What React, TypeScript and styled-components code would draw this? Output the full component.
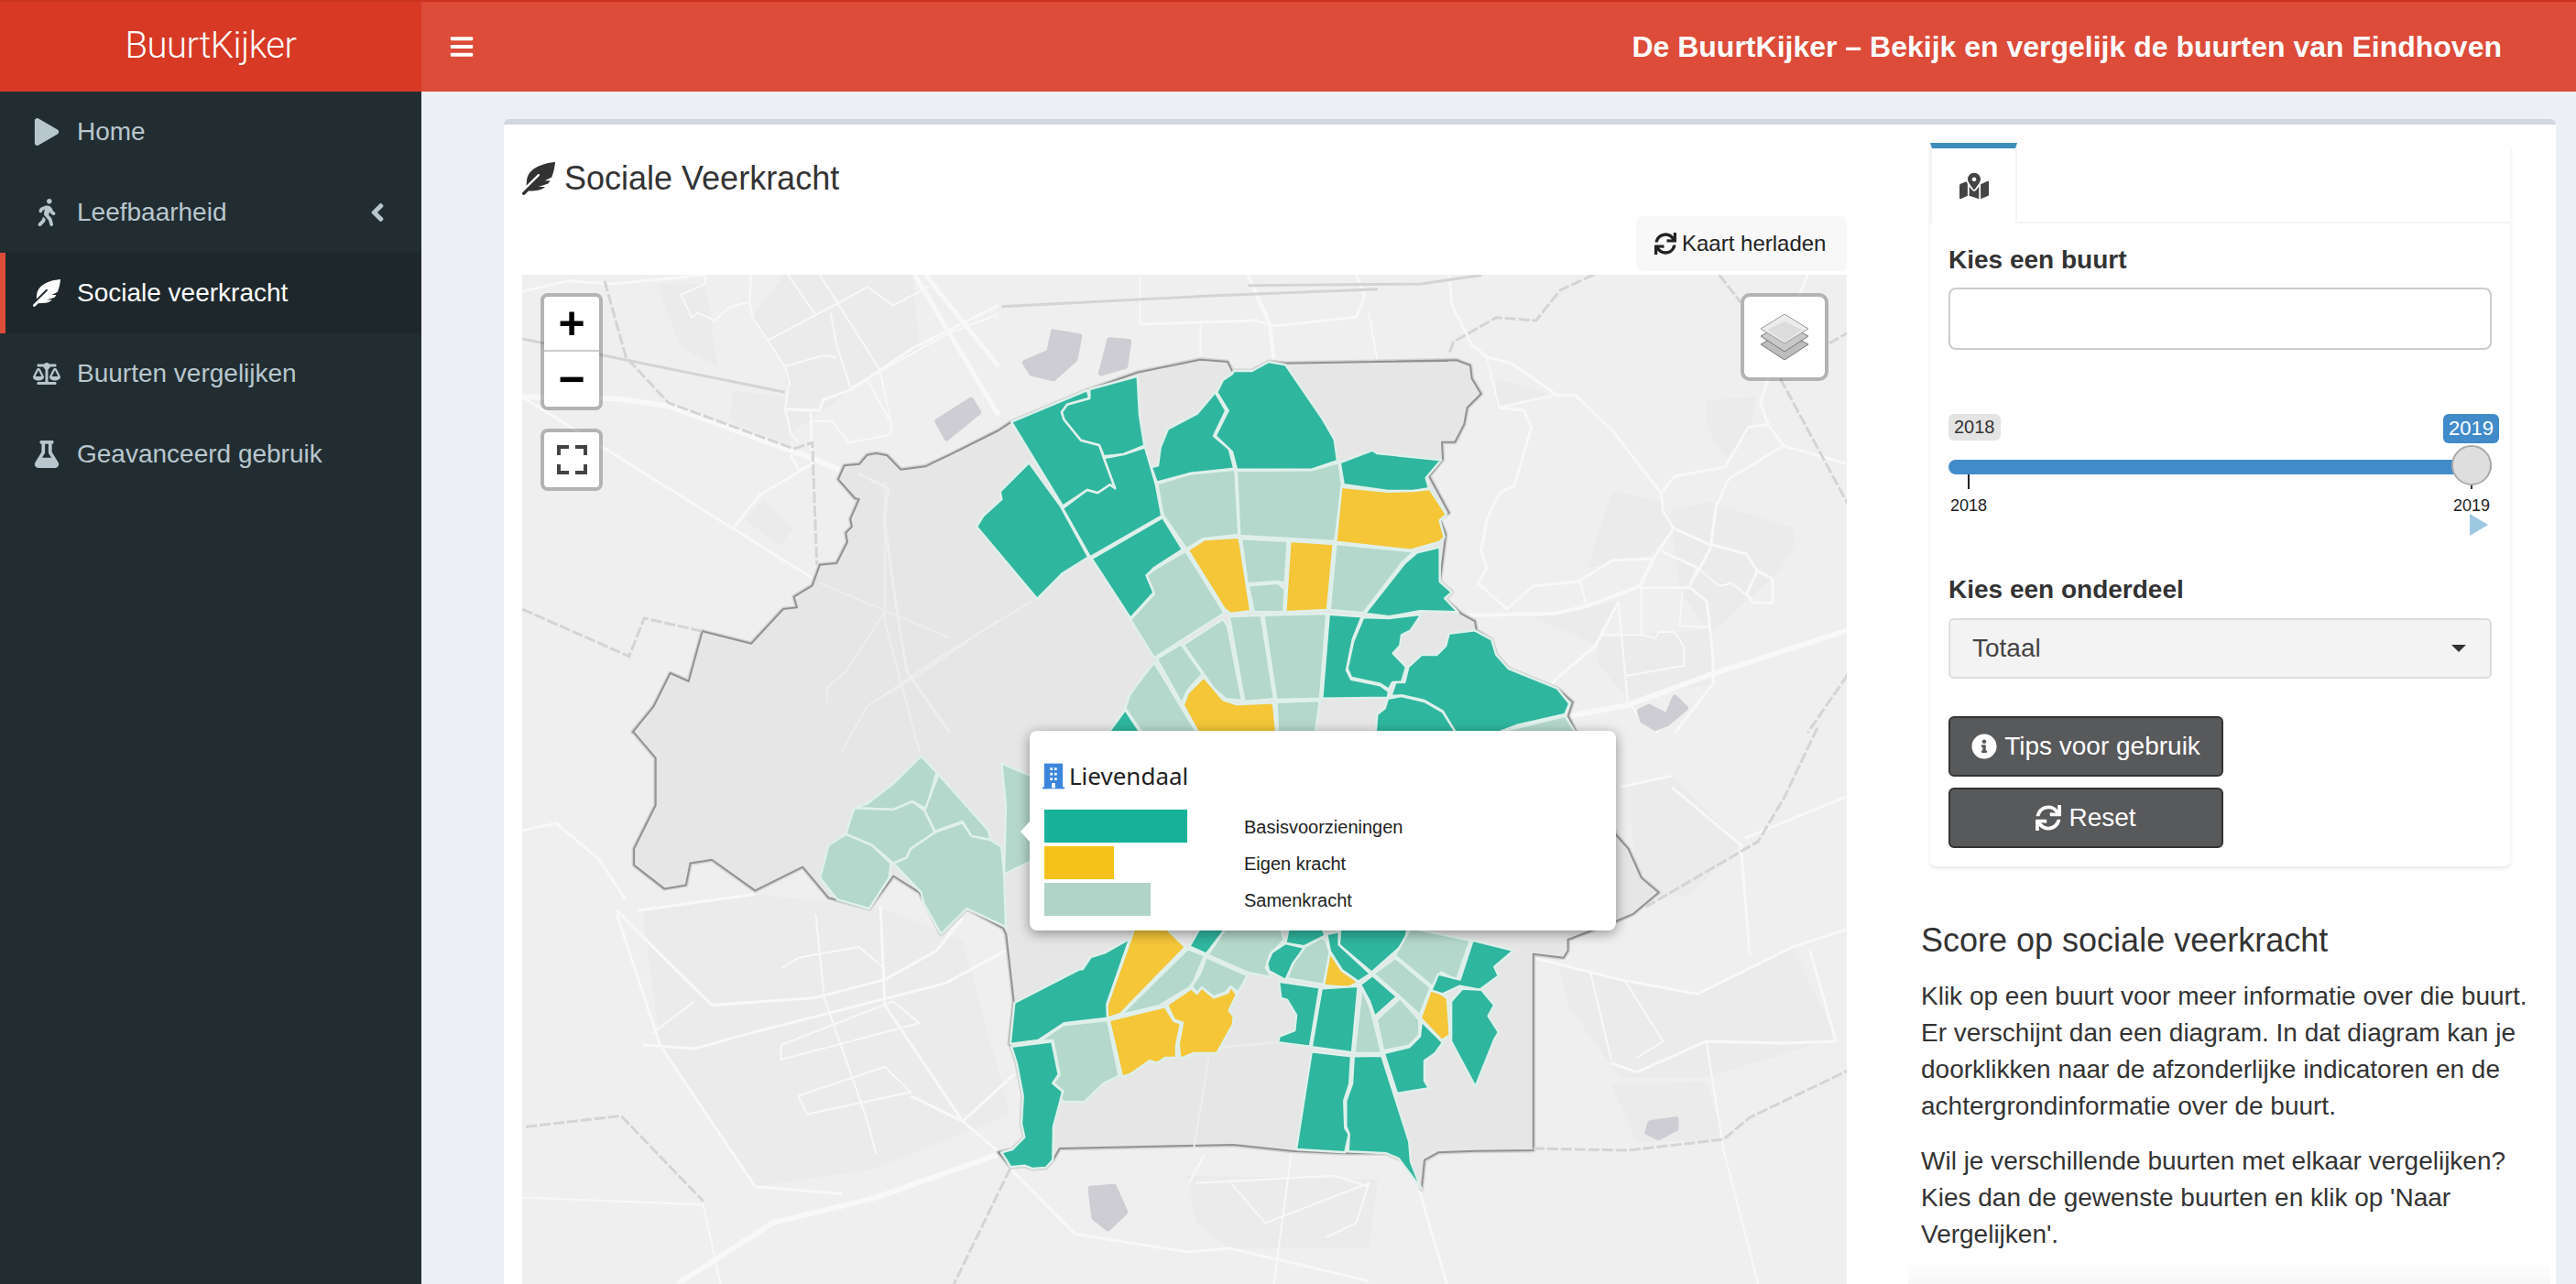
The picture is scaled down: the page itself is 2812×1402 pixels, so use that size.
import styled, { createGlobalStyle } from "styled-components";
import {
  FaAngleLeft,
  FaBalanceScale,
  FaBars,
  FaFeatherAlt,
  FaFlask,
  FaInfoCircle,
  FaMapMarkedAlt,
  FaPlay,
  FaSync,
  FaWalking,
} from "react-icons/fa";

const GlobalStyle = createGlobalStyle`
  html, body {
    margin: 0;
    padding: 0;
    height: 1402px;
    overflow: hidden;
    background: #ecf0f5;
    font-family: "Liberation Sans", Arial, sans-serif;
    color: #333;
  }
  * { box-sizing: border-box; }
`;

const Page = styled.div`
  display: flex;
  flex-direction: column;
  height: 1402px;
`;

const Header = styled.header`
  display: flex;
  flex: none;
  height: 100px;
  border-top: 2px solid #c8321f;
  color: #fff;
`;

const Logo = styled.div`
  width: 460px;
  padding-top: 2px;
  background: #d73925;
  font-family: Roboto, "Liberation Sans", sans-serif;
  font-size: 40px;
  font-weight: 300;
  letter-spacing: -0.5px;
  line-height: 92px;
  text-align: center;
`;

const Navbar = styled.div`
  flex: 1;
  display: flex;
  align-items: center;
  justify-content: space-between;
  padding: 0 81px 0 30px;
  background: #dd4b39;
  svg {
    font-size: 28px;
  }
`;

const NavTitle = styled.div`
  font-size: 32px;
  font-weight: bold;
`;

const Body = styled.div`
  flex: 1;
  display: flex;
  min-height: 0;
`;

const Sidebar = styled.nav`
  width: 460px;
  background: #222d32;
`;

const MenuItem = styled.div<{ $active?: boolean }>`
  display: flex;
  align-items: center;
  height: 88px;
  padding-left: ${(p) => (p.$active ? 30 : 36)}px;
  border-left: ${(p) => (p.$active ? "6px solid #dd4b39" : "none")};
  background: ${(p) => (p.$active ? "#1e282c" : "transparent")};
  color: ${(p) => (p.$active ? "#fff" : "#b8c7ce")};
  font-size: 28px;
`;

const MenuIcon = styled.span`
  display: flex;
  align-items: center;
  width: 48px;
  font-size: 30px;
`;

const MenuAngle = styled.span`
  display: flex;
  margin-left: auto;
  margin-right: 32px;
  font-size: 32px;
`;

const Content = styled.main`
  flex: 1;
  min-width: 0;
  padding: 30px 22px 0 90px;
`;

const Box = styled.section`
  display: flex;
  height: 100%;
  padding: 0 20px;
  border-top: 6px solid #d2d6de;
  border-radius: 6px 6px 0 0;
  background: #fff;
`;

const LeftColumn = styled.div`
  display: flex;
  flex-direction: column;
  width: 1446px;
`;

const BoxTitle = styled.h3`
  display: flex;
  align-items: center;
  gap: 10px;
  height: 40px;
  margin: 39px 0 0;
  font-size: 36px;
  font-weight: normal;
  line-height: 40px;
  svg {
    font-size: 36px;
  }
`;

const ReloadButton = styled.button`
  display: flex;
  align-items: center;
  align-self: flex-end;
  gap: 6px;
  width: 230px;
  height: 60px;
  margin: 21px 0 4px;
  padding: 0 0 0 20px;
  border: none;
  border-radius: 6px;
  background: #f8f8f8;
  color: #222;
  font-family: inherit;
  font-size: 24px;
`;

const MapFrame = styled.div`
  position: relative;
  flex: 1;
  overflow: hidden;
  background: #efefef;
  svg.base {
    display: block;
  }
`;

const ControlGroup = styled.div<{ $top: number }>`
  position: absolute;
  top: ${(p) => p.$top}px;
  left: 20px;
  width: 68px;
  border: 4px solid rgba(0, 0, 0, 0.25);
  border-radius: 8px;
  background: #fff;
  background-clip: padding-box;
`;

const ZoomButton = styled.div<{ $divider?: boolean }>`
  display: flex;
  align-items: center;
  justify-content: center;
  height: 60px;
  border-bottom: ${(p) => (p.$divider ? "2px solid #ccc" : "none")};
  color: #000;
  font-family: "Liberation Sans", sans-serif;
  font-size: 50px;
  font-weight: bold;
  line-height: 1;
`;

const LayersControl = styled.div`
  position: absolute;
  top: 20px;
  right: 20px;
  display: flex;
  align-items: center;
  justify-content: center;
  width: 96px;
  height: 96px;
  border: 4px solid rgba(0, 0, 0, 0.25);
  border-radius: 10px;
  background: #fff;
  background-clip: padding-box;
`;

const Popup = styled.div`
  position: absolute;
  top: 498px;
  left: 554px;
  width: 640px;
  height: 218px;
  padding: 33px 16px 0;
  border-radius: 8px;
  background: #fff;
  box-shadow: 0 3px 14px rgba(0, 0, 0, 0.4);
  &::before {
    content: "";
    position: absolute;
    top: 99px;
    left: -10px;
    border-style: solid;
    border-width: 11px 10px 11px 0;
    border-color: transparent #fff transparent transparent;
  }
`;

const PopupTitle = styled.div`
  display: flex;
  align-items: center;
  gap: 5px;
  height: 32px;
  margin-bottom: 21px;
  margin-left: -2px;
  color: #222;
  font-family: "Noto Sans", sans-serif;
  font-size: 26px;
`;

const ScoreRow = styled.div`
  display: grid;
  grid-template-columns: 218px 1fr;
  align-items: center;
  height: 36px;
  margin-bottom: 4px;
  color: #222;
  font-size: 20px;
`;

const ScoreLabel = styled.span`
  padding-top: 2px;
`;

const ScoreBar = styled.div<{ $width: number; $color: string }>`
  width: ${(p) => p.$width}px;
  height: 36px;
  background: ${(p) => p.$color};
`;

const RightColumn = styled.aside`
  position: relative;
  width: 680px;
  margin-left: 81px;
  &::after {
    content: "";
    position: absolute;
    right: -14px;
    bottom: 0;
    left: -14px;
    height: 28px;
    background: linear-gradient(rgba(0, 0, 0, 0), rgba(0, 0, 0, 0.03));
  }
`;

const TabBox = styled.div`
  width: 633px;
  margin: 20px 0 61px 10px;
  border-radius: 6px;
  background: #fff;
  box-shadow: 0 2px 4px rgba(0, 0, 0, 0.1);
`;

const TabBar = styled.div`
  height: 88px;
  border-bottom: 2px solid #f4f4f4;
`;

const ActiveTab = styled.div`
  display: flex;
  align-items: center;
  justify-content: center;
  width: 95px;
  height: 88px;
  border-top: 6px solid #3c8dbc;
  border-right: 2px solid #f4f4f4;
  border-left: 2px solid #f4f4f4;
  background: #fff;
  color: #444;
  font-size: 32px;
`;

const TabPane = styled.div`
  padding: 24px 20px 20px;
`;

const FieldLabel = styled.label`
  display: block;
  font-size: 28px;
  font-weight: bold;
  line-height: 32px;
`;

const TextInput = styled.div`
  height: 68px;
  margin: 14px 0 70px;
  border: 2px solid #ccc;
  border-radius: 8px;
  background: #fff;
`;

const SliderLabels = styled.div`
  display: flex;
  align-items: flex-start;
  justify-content: space-between;
  height: 32px;
  margin-right: -8px;
`;

const MinChip = styled.span`
  padding: 0 6px;
  border-radius: 6px;
  background: #e4e4e4;
  font-size: 20px;
  line-height: 29px;
`;

const MaxChip = styled.span`
  padding: 0 6px;
  border-radius: 6px;
  background: #428bca;
  color: #fff;
  font-size: 22px;
  line-height: 32px;
`;

const Track = styled.div`
  position: relative;
  height: 16px;
  margin-top: 18px;
  border-radius: 8px;
  background: #428bca;
`;

const Handle = styled.div`
  position: absolute;
  top: -16px;
  right: 0;
  width: 44px;
  height: 44px;
  border: 2px solid #aaa;
  border-radius: 50%;
  background: #dedede;
`;

const TickRow = styled.div`
  display: flex;
  justify-content: space-between;
`;

const TickCell = styled.div`
  display: flex;
  flex-direction: column;
  align-items: center;
  width: 44px;
  color: #222;
  font-size: 18px;
  line-height: 24px;
`;

const Tick = styled.div<{ $short?: boolean }>`
  width: 2px;
  height: 16px;
  margin-bottom: 6px;
  background: ${(p) => (p.$short ? "linear-gradient(transparent 70%, #333 70%)" : "#222")};
`;

const PlayRow = styled.div`
  display: flex;
  justify-content: flex-end;
  height: 24px;
  margin: -3px 0 43px;
  padding-right: 4px;
`;

const SelectBox = styled.div`
  display: flex;
  align-items: center;
  justify-content: space-between;
  height: 66px;
  margin: 15px 0 41px;
  padding: 0 26px 0 24px;
  border: 2px solid #ddd;
  border-radius: 6px;
  background: #f3f3f3;
  color: #444;
  font-size: 28px;
`;

const Caret = styled.span`
  border-style: solid;
  border-width: 8px 8px 0;
  border-color: #333 transparent transparent;
`;

const DarkButton = styled.button`
  display: flex;
  align-items: center;
  justify-content: center;
  gap: 8px;
  width: 300px;
  height: 66px;
  margin-bottom: 12px;
  border: 2px solid #333;
  border-radius: 6px;
  background: #58595b;
  color: #fff;
  font-family: inherit;
  font-size: 28px;
  &:last-child {
    margin-bottom: 0;
  }
`;

const ScoreHeading = styled.h3`
  margin: 0 0 21px;
  font-size: 36px;
  font-weight: normal;
  line-height: 40px;
`;

const Paragraph = styled.p`
  margin: 0 0 20px;
  font-size: 28px;
  line-height: 40px;
`;

// map coordinates were read from crops of different scale, each crop is a frame
type Frame = "t" | "b" | "n" | "s" | "w" | "e";
type Pts = number[];

const frames: Record<Frame, [number, number, number, number]> = {
  t: [560, 220, 0.9439, 0.3827],
  b: [560, 780, 0.9439, 0.3967],
  n: [1060, 390, 1 / 3, 1 / 3],
  s: [1090, 1010, 1 / 3, 1 / 3],
  w: [570, 300, 1 / 3, 1 / 3],
  e: [1500, 300, 1 / 3, 1 / 3],
};

const toPage = (frame: Frame, pts: Pts) => {
  const [ox, oy, sx, sy] = frames[frame];
  const out: string[] = [];
  for (let i = 0; i < pts.length; i += 2) {
    out.push(`${(ox + pts[i] * sx).toFixed(1)},${(oy + pts[i + 1] * sy).toFixed(1)}`);
  }
  return out.join(" ");
};

const TEAL = "#2fb69f";
const LIGHT = "#b4d8cb";
const YELLOW = "#f4c638";

const cityOutline = [
  toPage("w", [362,1498,430,1415,485,1305,545,1332,590,1168,750,1208,855,1095,900,1090,890,1055,950,1018,975,950,1030,945,1065,875,1060,845,1080,825,1075,800,1103,735,1090,732,1035,670,1055,625,1105,620,1130,590,1160,585,1195,592,1240,638,1320,628,1400,590,1560,510]),
  toPage("n", [132,212,380,108,545,50,750,8,840,15,855,45,920,45,975,15,1030,20,1330,15,1560,12]),
  toPage("e", [0,285,270,280,315,297,320,340,350,390,305,435,295,490,265,548,222,548,225,605,180,660,245,780,215,800,235,850,215,1005,255,1040,232,1060,285,1110,330,1135,335,1165,385,1195,400,1245,440,1290,600,1355,650,1400,635,1445,660,1495]),
  toPage("b", [1275,330,1290,370,1305,450,1325,490,1295,550,1275,570,1220,620,1220,650,1215,670,1180,660,1180,1200]),
  toPage("s", [1560,740,1440,745,1395,770,1385,865,1350,775,1310,765,1270,748,1135,748,960,740,770,720,200,732,178,770,155,795,110,798,85,788,40,793,0,745,45,735,85,695,75,650,80,560,60,455,42,398,35,390,50,250,25,30,15,10]),
  toPage("b", [525,535,495,605,470,490,440,445,412,535,365,505,335,420,280,485,230,400,205,410,200,470,175,480,140,415,140,370,165,250,165,120,140,50]),
].join(" ");

const hoods: [string, Frame, Pts][] = [
  [TEAL,"n",[132,212,380,108,388,135,315,155,297,180,305,205,360,272,420,288,435,330,472,430,455,418,415,445,380,435,300,488]],
  [TEAL,"n",[388,105,545,62,552,190,568,290,500,318,435,325,420,288,360,272,305,205,297,180,315,155,388,135]],
  [TEAL,"n",[570,295,605,415,625,520,390,655,300,495,380,435,415,445,455,418,472,430,435,330,500,318]],
  [TEAL,"n",[190,345,295,490,385,655,300,708,217,792,18,555,40,520,100,465,95,440]],
  [TEAL,"n",[628,525,693,630,600,690,575,715,600,770,522,855,395,660]],
  [TEAL,"n",[800,115,835,175,795,258,845,300,862,365,720,380,608,410,590,360,612,355,620,295,645,235,740,185]],
  [TEAL,"n",[975,15,1030,25,1150,200,1190,270,1200,340,1115,368,870,368,855,310,800,258,842,175,805,115,825,75,855,55,860,45,920,45]],
  [TEAL,"n",[1208,345,1315,305,1330,315,1540,337,1490,395,1500,430,1450,438,1365,438,1220,418]],
  [LIGHT,"n",[610,415,720,382,865,368,877,582,760,595,705,628,628,515]],
  [LIGHT,"n",[870,372,1115,370,1205,345,1215,420,1192,603,880,585]],
  [YELLOW,"n",[1213,425,1365,440,1450,438,1502,432,1557,515,1535,535,1550,590,1535,605,1440,632,1195,605]],
  [YELLOW,"n",[765,597,878,590,916,832,850,840,830,825,710,632]],
  [LIGHT,"n",[885,595,1037,602,1028,740,1005,735,905,742]],
  [LIGHT,"n",[908,748,1005,740,1028,760,1024,835,926,835]],
  [YELLOW,"n",[1045,602,1187,612,1167,828,1030,835]],
  [LIGHT,"n",[1195,612,1450,637,1410,675,1285,838,1175,828]],
  [TEAL,"n",[1420,675,1460,640,1535,622,1535,735,1575,770,1552,790,1595,835,1470,832,1370,850,1290,840]],
  [LIGHT,"n",[703,635,830,838,600,985,522,860,600,775,575,715,600,695]],
  [LIGHT,"n",[825,858,840,880,888,1125,835,1120,795,1085,695,942]],
  [LIGHT,"n",[845,850,950,845,993,1120,895,1128]],
  [LIGHT,"n",[958,845,1165,840,1143,1118,1000,1122]],
  [LIGHT,"n",[608,988,688,940,758,1038,710,1090,690,1135]],
  [YELLOW,"n",[762,1048,825,1122,870,1137,990,1132,1000,1230,745,1230,695,1140,710,1100]],
  [LIGHT,"n",[600,1000,685,1140,740,1230,560,1230,505,1150,520,1105,560,1050]],
  [TEAL,"n",[505,1155,555,1230,450,1230]],
  [LIGHT,"n",[1000,1130,1142,1125,1128,1230,1005,1230]],
  [TEAL,"n",[1172,842,1280,850,1250,925,1230,1025,1245,1055,1340,1075,1368,1095,1365,1115,1150,1118]],
  [TEAL,"n",[1285,852,1370,855,1475,842,1440,895,1410,910,1405,945,1382,970,1425,1015,1410,1065,1380,1065,1368,1088,1340,1070,1245,1050,1232,1020,1252,930]],
  [TEAL,"e",[245,1175,330,1165,385,1195,400,1245,440,1290,600,1355,640,1405,625,1440,470,1475,405,1500,265,1500,225,1430,165,1395,90,1378,55,1380,70,1335,100,1335,112,1285,155,1245,205,1245,235,1215]],
  [TEAL,"e",[45,1388,90,1380,165,1398,225,1432,268,1500,5,1500,10,1440,35,1420]],
  [LIGHT,"e",[405,1500,625,1445,660,1500]],

  [LIGHT,"b",[472,115,490,160,478,260,462,240,440,262,395,258,410,245,440,190]],
  [LIGHT,"b",[492,165,550,320,552,345,530,335,520,295,488,322,476,265]],
  [LIGHT,"b",[395,258,440,262,462,240,476,265,488,325,460,370,455,395,440,410,415,360,385,330,390,290]],
  [LIGHT,"b",[385,330,415,360,437,410,435,450,412,535,375,510,355,450,365,360]],
  [LIGHT,"b",[488,325,520,298,530,335,552,345,565,365,568,440,570,585,525,535,495,605,475,520,472,490,440,410,455,395,460,370]],
  [LIGHT,"b",[565,135,620,190,620,380,568,440,570,250]],

  [YELLOW,"s",[435,40,355,265,357,305,398,292,612,72,548,10,445,10]],
  [TEAL,"s",[625,70,660,10,745,10,680,95]],
  [TEAL,"s",[430,45,355,260,357,305,215,322,130,378,38,390,52,255,265,145,275,145,302,105,350,90]],
  [LIGHT,"s",[620,78,675,100,640,185,625,205,525,265,400,295]],
  [LIGHT,"s",[680,105,815,165,785,220,760,202,745,220,705,235,665,205,650,222,632,200,660,160]],
  [LIGHT,"s",[745,10,925,10,935,50,890,95,875,140,895,172,815,155,685,98]],
  [YELLOW,"s",[552,262,632,208,650,225,665,205,705,238,750,222,762,202,780,228,755,280,770,300,768,325,715,420,640,420,595,438,590,390,603,320,575,310]],
  [YELLOW,"s",[362,312,545,268,575,315,597,322,582,395,582,435,545,435,520,452,495,445,430,490,405,497]],
  [LIGHT,"s",[357,312,395,495,345,518,280,580,215,578,200,570,212,545,180,518,200,490,178,378,135,380,212,328]],
  [TEAL,"s",[42,398,175,382,197,490,178,518,210,545,200,585,180,660,178,770,155,795,110,798,85,788,40,793,10,745,45,735,85,695,75,650,80,560,60,455]],
  [TEAL,"s",[950,10,1060,10,1070,35,1010,65,1000,70,940,60]],
  [TEAL,"s",[1005,75,965,125,940,180,885,150,880,125,895,90,940,60]],
  [LIGHT,"s",[1060,42,1072,50,1085,90,1065,195,945,175,965,125,1005,70]],
  [YELLOW,"s",[1085,90,1125,150,1178,187,1145,205,1065,198]],
  [TEAL,"s",[1120,10,1340,10,1330,60,1222,155,1115,65]],
  [TEAL,"s",[1075,30,1115,22,1115,65,1218,160,1178,185,1125,148,1085,85]],
  [LIGHT,"s",[1350,10,1545,50,1500,180,1450,155,1420,200,1298,100]],
  [LIGHT,"s",[1300,108,1415,205,1380,295,1315,235,1228,160]],
  [TEAL,"s",[1225,165,1305,235,1232,300,1215,250,1185,195]],
  [YELLOW,"s",[1418,205,1470,240,1478,360,1452,378,1382,305]],
  [LIGHT,"s",[1315,240,1378,310,1378,360,1345,395,1260,412,1238,310]],
  [LIGHT,"s",[1190,205,1220,280,1255,420,1165,420]],
  [TEAL,"s",[918,185,1052,205,1020,398,915,385,920,365,970,345,975,295,945,245,925,240]],
  [TEAL,"s",[1058,208,1178,200,1158,418,1025,400]],
  [TEAL,"s",[1385,315,1455,385,1430,420,1395,445,1395,510,1410,535,1305,552,1262,420,1345,400,1380,365]],
  [TEAL,"s",[1025,415,1155,430,1150,520,1132,575,1135,665,1148,685,1135,745,975,735]],
  [TEAL,"s",[1163,430,1255,428,1345,710,1350,775,1385,865,1310,765,1270,748,1145,742,1148,685,1138,660,1138,575,1158,520]],
  [TEAL,"b",[1110,622,1157,650,1135,695,1140,720,1118,758,1095,748,1075,770,1062,760,1070,715,1095,730]],
  [TEAL,"b",[1098,755,1120,758,1135,800,1128,830,1140,875,1135,895,1113,1025,1085,900,1085,790]],
];

// built-up areas around the city, a bit darker than the base map
const patches: [Frame, Pts][] = [
  ["w",[440,30,600,30,640,300,520,240]],
  ["w",[690,380,860,400,880,560,680,480]],
  ["w",[730,800,790,740,890,830,840,890]],
  ["w",[860,0,1280,0,1300,240,1080,375,880,520,860,300,750,140]],
  ["e",[400,340,570,390,400,430]],
  ["e",[1090,410,1250,400,1230,520,1150,600,1090,500]],
  ["e",[780,710,940,740,985,830,900,920,700,960,740,830]],
  ["e",[970,770,1100,745,1375,830,1380,880,1320,980,1230,1060,1100,1180,1000,1030]],
  ["e",[520,1120,800,1070,720,1210]],
  ["e",[730,1190,1100,1160,1110,1340,830,1390,730,1270]],
  ["b",[150,540,280,495,420,530,520,620,575,1100,420,1250,280,1300,170,910]],
  ["b",[1210,690,1285,730,1370,770,1480,640,1530,890,1380,1000,1280,1000,1220,800]],
  ["b",[1290,200,1340,170,1420,360,1360,500,1300,500]],
  ["b",[780,1270,1000,1280,990,1470,830,1470,790,1400]],
  ["b",[1270,1020,1380,1010,1400,1170,1300,1180]],
];

const roads: [Frame, number, Pts][] = [
  ["w",3,[0,55,150,20,300,30,600,0]],
  ["w",2,[600,0,600,30,520,65,555,140,575,125,630,150,680,105,745,90,750,0]],
  ["w",2,[745,90,755,140,860,300,875,350,860,440,880,520,905,550]],
  ["w",3,[865,440,975,445,985,410,1080,375,1280,240,1560,100]],
  ["w",2,[1075,370,1400,190,1560,130]],
  ["w",2,[805,215,1040,90,1130,40,1215,100,1330,40]],
  ["w",2,[870,0,960,130]],
  ["w",2,[975,0,1170,310,1210,490,1205,525,1070,550,1015,480,950,480]],
  ["w",2,[1010,125,1030,230,1075,370]],
  ["w",2,[860,300,985,265,1030,270]],
  ["w",5,[1285,0,1560,460]],
  ["w",5,[1320,0,1560,300]],
  ["w",2,[1135,350,1210,490]],
  ["w",6,[0,400,300,405,480,430,960,605,1040,640]],
  ["w",3,[945,450,950,630]],
  ["w",3,[880,590,905,640,950,620,780,720,690,830]],
  ["w",3,[0,400,960,1000]],
  ["e",3,[245,0,255,100,320,230,370,270,450,290,600,395,660,395,780,510,940,715,945,770,980,830,1090,880,1220,915,1255,970,1220,1045,1240,1075,1305,1075,1305,995,1255,970]],
  ["e",2,[370,275,410,435,590,395]],
  ["e",3,[410,435,490,445,515,500,460,690,410,715,370,800,350,905,370,960,340,1010,435,1095,520,1020,670,1005]],
  ["e",3,[670,1005,780,935,915,930,980,830]],
  ["e",4,[915,930,870,1020,700,1085,590,1110,300,1115]],
  ["e",3,[940,715,985,660,1150,630,1225,500,1290,490,1340,560,1160,670,1120,760,1100,900,1035,1015,1060,960,940,905]],
  ["e",3,[1340,560,1551,620]],
  ["e",3,[1290,490,1265,420,1330,220,1420,0]],
  ["e",2,[675,1005,695,1085]],
  ["e",3,[870,1025,1035,1025,1090,1070,1110,1250,1110,1340,985,1500]],
  ["e",2,[875,1030,875,1180,750,1180]],
  ["e",2,[1000,1150,1100,1155]],
  ["e",3,[800,1070,725,1215,600,1320,575,1350]],
  ["e",2,[800,1070,830,1395,870,1450,930,1500]],
  ["e",2,[875,1180,920,1190,935,1170,985,1170,1015,1220,1015,1280,820,1315]],
  ["e",2,[1010,1035,1000,1150]],
  ["e",2,[1060,960,1130,1020,1170,1010,1220,1050]],
  ["e",6,[640,1445,830,1410,1100,1310,1551,1165]],
  ["t",4,[850,210,875,350,880,450]],
  ["t",3,[725,350,860,340,880,355,975,330,985,270,975,210]],
  ["t",2,[725,350,725,210]],
  ["t",2,[795,340,795,450]],
  ["t",2,[990,320,1000,460]],
  ["b",6,[562,1210,420,1330,300,1400,190,1568]],
  ["b",3,[120,550,170,910,280,1300,380,1320]],
  ["b",3,[145,540,280,495]],
  ["b",3,[150,910,210,920,270,880,500,740,570,650,670,660]],
  ["b",3,[120,540,200,730,230,800,350,780,430,730,490,650,520,560]],
  ["b",2,[350,550,360,780,410,1120,420,1210]],
  ["b",3,[425,530,430,800,520,1120,575,1230]],
  ["b",3,[460,1050,520,1120,580,990]],
  ["b",2,[310,910,440,790,470,850,310,950,310,910]],
  ["b",2,[330,1050,430,970,460,1040,340,1100,330,1050]],
  ["b",2,[310,700,330,670,400,640,430,700]],
  ["b",2,[210,790,160,880]],
  ["b",3,[1180,670,1280,730,1370,770,1480,640,1544,590]],
  ["b",3,[1270,960,1300,985,1380,900,1470,905,1530,900,1500,650]],
  ["b",2,[1245,700,1270,950]],
  ["b",2,[1285,730,1330,900,1300,945]],
  ["b",3,[1340,200,1420,360,1430,660]],
  ["b",3,[1280,200,1340,170]],
  ["b",3,[1425,340,1544,225]],
  ["b",3,[10,320,50,300,100,400,130,510]],
  ["b",2,[10,1330,220,1350,240,1568]],
  ["b",2,[800,1210,782,1290]],
  ["b",2,[900,1210,880,1568]],
  ["b",3,[1048,1310,1080,1568]],
  ["b",3,[575,1250,650,1430,780,1480,830,1470,990,1560]],
  ["b",2,[830,1290,870,1400,990,1290,975,1400,940,1440]],
  ["b",2,[1380,900,1400,1200,1440,1568]],
  ["b",2,[790,1290,950,1270,990,1300]],
];

// fainter streets inside the city outline
const faintRoads: [Frame, number, Pts][] = [
  ["w",3,[1100,650,1200,700,1185,800,1230,1120,1260,1300,1400,1500]],
  ["w",2,[1190,1100,1060,1300,1000,1350,1000,1400]],
  ["w",2,[1150,1400,1300,1310,1560,1130]],
  ["w",2,[975,1010,1400,1190]],
  ["t",2,[600,1140,500,1290,410,1440,380,1568]],
  ["t",2,[430,800,430,1200,470,1568]],
  ["s",2,[690,425,640,730]],
  ["s",2,[735,400,915,385]],
  ["b",2,[1000,320,1000,600]],
];

const rails: [Frame, Pts, boolean][] = [
  ["w",[0,210,860,385],false],
  ["w",[270,20,340,270,480,420,890,570],true],
  ["w",[890,570,950,550,965,950],true],
  ["w",[0,1095,350,1250,400,1125,590,1168],true],
  ["t",[565,300,800,270,1000,250],false],
  ["t",[850,240,1050,235,1120,210],false],
  ["e",[720,0,610,50,530,150,400,140,260,220,245,260],true],
  ["e",[1130,0,1200,90],true],
  ["e",[1330,340,1551,750],true],
  ["e",[1551,1310,1420,1500],true],
  ["e",[1490,225,1551,190],true],
  ["b",[15,1135,125,1105,220,1340],true],
  ["b",[1310,530,1440,350,1470,230,1510,30],true],
  ["b",[1180,1195,1290,1200,1400,1170,1430,1110,1544,980],true],
  ["b",[575,1250,510,1568],true],
];

const ponds: [Frame, Pts][] = [
  ["t",[625,372,655,385,650,450,625,505,600,490,592,460,620,430]],
  ["t",[690,395,712,400,708,470,680,490]],
  ["w",[1360,480,1470,410,1495,450,1390,535]],
  ["e",[870,1430,900,1415,960,1445,985,1385,1020,1420,960,1470,920,1485,880,1460]],
  ["b",[668,1305,695,1300,708,1370,688,1415,672,1385]],
  ["b",[1315,1125,1345,1115,1345,1140,1325,1165,1312,1150]],
];

const CityMap = () => (
  <svg className="base" width="1446" height="1102" viewBox="570 300 1446 1102">
    {patches.map(([f, p], i) => (
      <polygon key={i} points={toPage(f, p)} fill="#ebebeb" />
    ))}
    {roads.map(([f, w, p], i) => (
      <polyline key={i} points={toPage(f, p)} fill="none" stroke="#f8f8f8" strokeWidth={w} strokeLinejoin="round" />
    ))}
    <polygon points={cityOutline} fill="none" stroke="#d4d4d4" strokeWidth="5" strokeLinejoin="round" />
    <polygon points={cityOutline} fill="#e6e6e6" stroke="#929292" strokeWidth="2" strokeLinejoin="round" />
    {faintRoads.map(([f, w, p], i) => (
      <polyline key={i} points={toPage(f, p)} fill="none" stroke="#eeeeee" strokeWidth={w} strokeLinejoin="round" />
    ))}
    {ponds.map(([f, p], i) => (
      <polygon key={i} points={toPage(f, p)} fill="#cdcdd3" strokeLinejoin="round" stroke="#cdcdd3" strokeWidth="6" />
    ))}
    {rails.map(([f, p, dashed], i) => (
      <polyline
        key={i}
        points={toPage(f, p)}
        fill="none"
        stroke="#d4d4d4"
        strokeWidth="3"
        strokeDasharray={dashed ? "12 3" : undefined}
      />
    ))}
    {hoods.map(([fill, f, p], i) => (
      <polygon key={i} points={toPage(f, p)} fill={fill} stroke="#dff0eb" strokeWidth="2.5" strokeLinejoin="round" />
    ))}
  </svg>
);

const LayersIcon = () => (
  <svg width="52" height="50" viewBox="0 0 52 50">
    <path d="M26 19 52 33 26 50 0 33Z" fill="#bdbdbd" stroke="#777" />
    <path d="M26 10 52 24 26 41 0 24Z" fill="#c9c9c9" stroke="#777" />
    <path d="M26 0 52 16 26 32 0 16Z" fill="#ececec" stroke="#999" />
    <path d="M26 8 45 17 26 30 7 17Z" fill="#dcdcdc" />
  </svg>
);

const FullscreenIcon = () => (
  <svg width="33" height="32" viewBox="0 0 33 32" fill="none" stroke="#444" strokeWidth="4">
    <path d="M2 11V2H13M20 2H31V11M31 21V30H20M13 30H2V21" />
  </svg>
);

const BuildingIcon = () => (
  <svg width="24" height="29" viewBox="0 0 26 30">
    <rect x="2" y="0" width="22" height="29" fill="#3b86dc" />
    <rect x="0" y="28" width="26" height="2" fill="#3b86dc" />
    <path d="M9 5h3v3H9zM14 5h3v3h-3zM9 11h3v3H9zM14 11h3v3h-3zM9 17h3v3H9zM14 17h3v3h-3zM11 23h4v6h-4z" fill="#fff" />
  </svg>
);

const PlayTriangle = () => (
  <svg width="20" height="24" viewBox="0 0 20 24">
    <polygon points="0,0 20,12 0,24" fill="#9cc8e2" />
  </svg>
);

const scores = [
  { label: "Basisvoorzieningen", width: 156, color: "#16b198" },
  { label: "Eigen kracht", width: 76, color: "#f3c31c" },
  { label: "Samenkracht", width: 116, color: "#b1d4c8" },
];

const menu = [
  { label: "Home", icon: <FaPlay /> },
  { label: "Leefbaarheid", icon: <FaWalking />, angle: true },
  { label: "Sociale veerkracht", icon: <FaFeatherAlt />, active: true },
  { label: "Buurten vergelijken", icon: <FaBalanceScale /> },
  { label: "Geavanceerd gebruik", icon: <FaFlask /> },
];

function App() {
  return (
    <Page>
      <GlobalStyle />
      <Header>
        <Logo>BuurtKijker</Logo>
        <Navbar>
          <FaBars />
          <NavTitle>De BuurtKijker – Bekijk en vergelijk de buurten van Eindhoven</NavTitle>
        </Navbar>
      </Header>
      <Body>
        <Sidebar>
          {menu.map((item) => (
            <MenuItem key={item.label} $active={item.active}>
              <MenuIcon>{item.icon}</MenuIcon>
              {item.label}
              {item.angle && (
                <MenuAngle>
                  <FaAngleLeft />
                </MenuAngle>
              )}
            </MenuItem>
          ))}
        </Sidebar>
        <Content>
          <Box>
            <LeftColumn>
              <BoxTitle>
                <FaFeatherAlt />
                Sociale Veerkracht
              </BoxTitle>
              <ReloadButton>
                <FaSync />
                Kaart herladen
              </ReloadButton>
              <MapFrame>
                <CityMap />
                <ControlGroup $top={20}>
                  <ZoomButton $divider>+</ZoomButton>
                  <ZoomButton>−</ZoomButton>
                </ControlGroup>
                <ControlGroup $top={168}>
                  <ZoomButton>
                    <FullscreenIcon />
                  </ZoomButton>
                </ControlGroup>
                <LayersControl>
                  <LayersIcon />
                </LayersControl>
                <Popup>
                  <PopupTitle>
                    <BuildingIcon />
                    Lievendaal
                  </PopupTitle>
                  {scores.map((s) => (
                    <ScoreRow key={s.label}>
                      <ScoreBar $width={s.width} $color={s.color} />
                      <ScoreLabel>{s.label}</ScoreLabel>
                    </ScoreRow>
                  ))}
                </Popup>
              </MapFrame>
            </LeftColumn>
            <RightColumn>
              <TabBox>
                <TabBar>
                  <ActiveTab>
                    <FaMapMarkedAlt />
                  </ActiveTab>
                </TabBar>
                <TabPane>
                  <FieldLabel>Kies een buurt</FieldLabel>
                  <TextInput />
                  <SliderLabels>
                    <MinChip>2018</MinChip>
                    <MaxChip>2019</MaxChip>
                  </SliderLabels>
                  <Track>
                    <Handle />
                  </Track>
                  <TickRow>
                    <TickCell>
                      <Tick />
                      2018
                    </TickCell>
                    <TickCell>
                      <Tick $short />
                      2019
                    </TickCell>
                  </TickRow>
                  <PlayRow>
                    <PlayTriangle />
                  </PlayRow>
                  <FieldLabel>Kies een onderdeel</FieldLabel>
                  <SelectBox>
                    Totaal
                    <Caret />
                  </SelectBox>
                  <DarkButton>
                    <FaInfoCircle />
                    Tips voor gebruik
                  </DarkButton>
                  <DarkButton>
                    <FaSync />
                    Reset
                  </DarkButton>
                </TabPane>
              </TabBox>
              <ScoreHeading>Score op sociale veerkracht</ScoreHeading>
              <Paragraph>
                Klik op een buurt voor meer informatie over die buurt. Er verschijnt dan een diagram. In dat diagram kan
                je doorklikken naar de afzonderlijke indicatoren en de achtergrondinformatie over de buurt.
              </Paragraph>
              <Paragraph>
                Wil je verschillende buurten met elkaar vergelijken? Kies dan de gewenste buurten en klik op 'Naar
                Vergelijken'.
              </Paragraph>
            </RightColumn>
          </Box>
        </Content>
      </Body>
    </Page>
  );
}

export default App;
